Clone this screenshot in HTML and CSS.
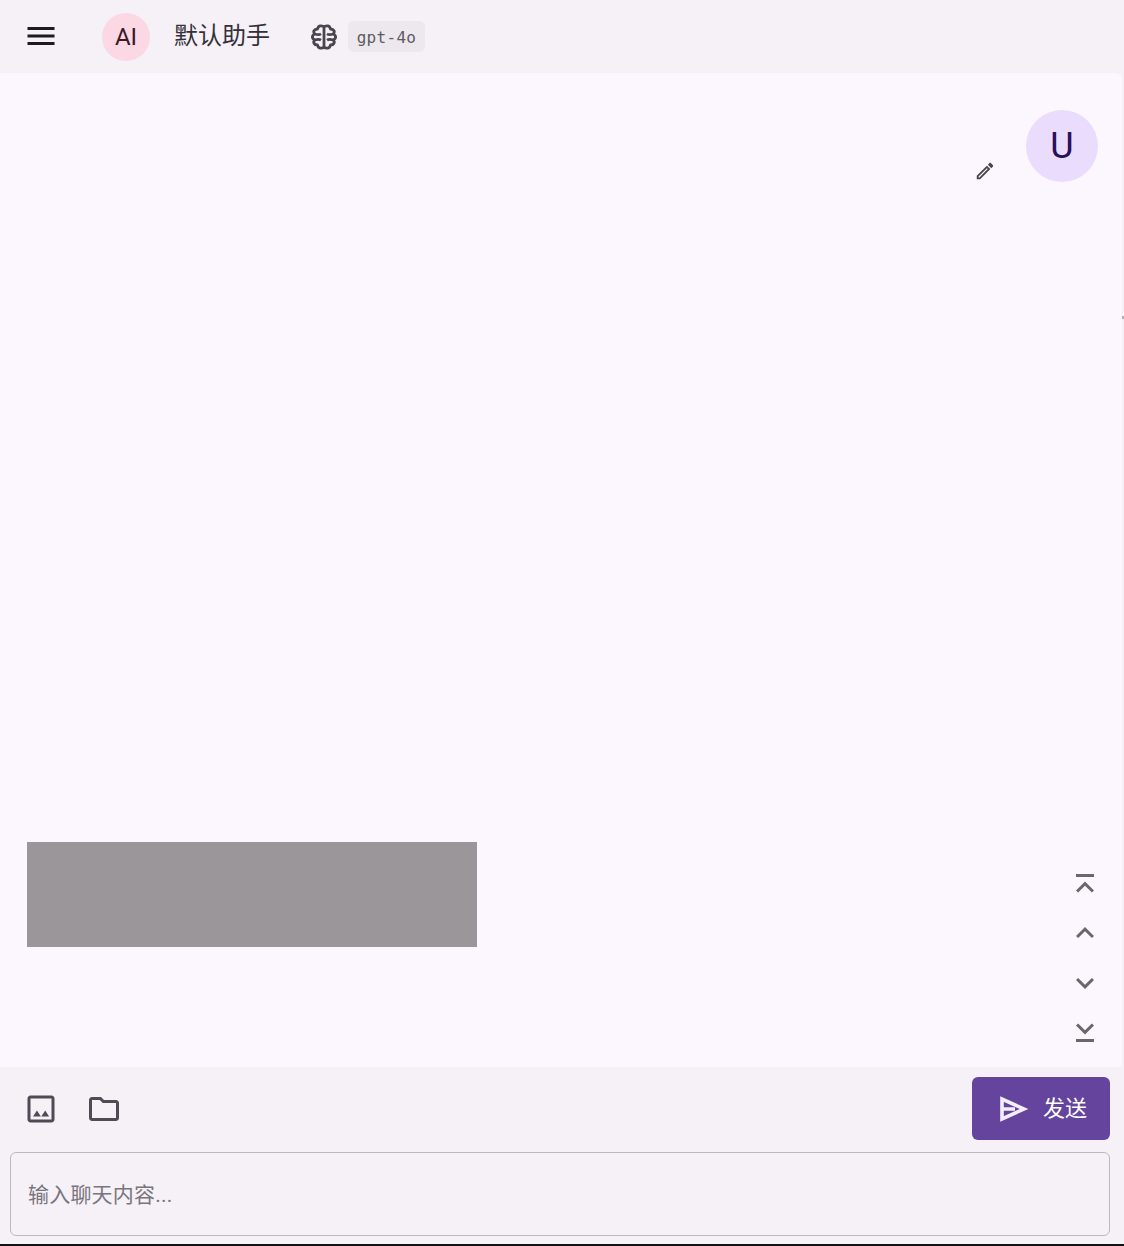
FILE: index.html
```html
<!DOCTYPE html>
<html lang="zh">
<head>
<meta charset="utf-8">
<title>默认助手</title>
<link rel="stylesheet" href="styles.css">
</head>
<body>
<div class="app">
  <header class="header">
    <svg class="icon36 menu-icon" viewBox="0 0 24 24"><path d="M3 18h18v-2H3v2zm0-5h18v-2H3v2zm0-7v2h18V6H3z"/></svg>
    <div class="avatar-ai">AI</div>
    <div class="title">默认助手</div>
    <svg class="brain" viewBox="0 0 28 28"><path d="M14 4C12 2 8 2.500 7.500 6 4 6 2.500 9 5 11 1.500 12.500 1.500 15.500 5 17 2.500 19 4 22 7.500 22 8 25.500 12 26 14 24 16 26 20 25.500 20.500 22 24 22 25.500 19 23 17 26.500 15.500 26.500 12.500 23 11 25.500 9 24 6 20.500 6 20 2.500 16 2 14 4V24M5 11c2.500.8 4.500.8 6-.2M5 17c2.500-.8 4.500-.8 6 .2M23 11c-2.500.8-4.500.8-6-.2M23 17c-2.500-.8-4.500-.8-6 .2"/></svg>
    <div class="chip">gpt-4o</div>
  </header>
  <main class="chat">
    <div class="user-row">
      <svg class="edit-icon" viewBox="0 0 24 24"><path d="M14.06 9.02l.92.92L5.920 19H5v-.92l9.060-9.060M17.660 3c-.25 0-.51.1-.7.29l-1.830 1.830 3.750 3.750 1.830-1.830c.39-.39.39-1.020 0-1.410l-2.340-2.340c-.2-.2-.45-.29-.71-.29zm-3.600 3.190L3 17.250V21h3.750L17.810 9.940l-3.750-3.750z"/></svg>
      <div class="avatar-user">U</div>
    </div>
    <div class="image-block"></div>
    <div class="scroll-buttons">
      <svg class="icon36" viewBox="0 0 24 24"><path d="M6 6h12v2H6zM7.410 18.410 12 13.830l4.590 4.580L18 17l-6-6-6 6z"/></svg>
      <svg class="icon36" viewBox="0 0 24 24"><path d="M7.410 15.410 12 10.830l4.590 4.580L18 14l-6-6-6 6z"/></svg>
      <svg class="icon36" viewBox="0 0 24 24"><path d="M7.410 8.590 12 13.170l4.590-4.580L18 10l-6 6-6-6z"/></svg>
      <svg class="icon36" viewBox="0 0 24 24"><path d="M6 16h12v2H6zM7.410 5.590 12 10.170l4.590-4.580L18 7l-6 6-6-6z"/></svg>
    </div>
    <span class="edge-mark"></span>
  </main>
  <footer class="composer">
    <div class="toolbar">
      <div class="tools">
        <svg class="icon36" viewBox="0 0 24 24"><path d="M19 5v14H5V5h14m0-2H5c-1.100 0-2 .9-2 2v14c0 1.100.9 2 2 2h14c1.100 0 2-.9 2-2V5c0-1.100-.9-2-2-2zM6.700 17l2.600-4 2.600 4zm5.500 0 2.600-4 2.600 4z"/></svg>
        <svg class="icon36" viewBox="0 0 24 24"><path d="M9.170 6l2 2H20v10H4V6h5.170M10 4H4c-1.100 0-1.990.9-1.990 2L2 18c0 1.100.9 2 2 2h16c1.100 0 2-.9 2-2V8c0-1.100-.9-2-2-2h-8l-2-2z"/></svg>
      </div>
      <button class="send" type="button">
        <svg class="send-icon" viewBox="0 0 33 33"><path class="send-outline" d="M4 7V27L26 17zM4 17H17"/></svg>
        <span class="send-label">发送</span>
      </button>
    </div>
    <div class="input">输入聊天内容...</div>
  </footer>
  <div class="bottom-line"></div>
</div>
</body>
</html>
```
FILE: styles.css
```css
* { box-sizing: border-box; }
html, body { margin: 0; padding: 0; }
body {
  font-family: Roboto, "Noto Sans CJK SC", sans-serif;
  background: #f6f0f7;
  color: #49454f;
}
.app {
  width: 1124px;
  height: 1246px;
  display: flex;
  flex-direction: column;
  background: #f6f0f7;
  overflow: hidden;
}
.icon36 { width: 36px; height: 36px; flex: none; fill: #4f4a55; display: block; }
.header {
  height: 73px;
  flex: none;
  display: flex;
  align-items: center;
  padding-left: 23px;
}
.menu-icon { fill: #1d1b20; margin-bottom: 2px; }
.avatar-ai {
  width: 48px;
  height: 48px;
  margin-left: 43px;
  border-radius: 50%;
  background: #fbd8e4;
  color: #3c1a28;
  font-size: 24px;
  display: flex;
  align-items: center;
  justify-content: center;
}
.title {
  margin-left: 24px;
  margin-bottom: 1px;
  font-size: 24px;
  line-height: 32px;
  color: #333137;
}
.brain {
  width: 28px;
  height: 28px;
  margin-left: 40px;
  fill: none;
  stroke: #49454f;
  stroke-width: 2.8;
  stroke-linejoin: round;
}
.chip {
  margin-left: 10px;
  width: 77px;
  height: 31px;
  border-radius: 6px;
  background: #ece8ed;
  color: #5f5b63;
  font-family: "DejaVu Sans Mono", monospace;
  font-size: 16px;
  letter-spacing: 0.3px;
  padding-top: 2px;
  display: flex;
  align-items: center;
  justify-content: center;
}
.chat {
  flex: 1;
  margin-right: 2px;
  background: #fcf7fe;
  border-top-right-radius: 6px;
  position: relative;
  display: flex;
  flex-direction: column;
  justify-content: space-between;
  padding: 37px 24px 120px 27px;
}
.user-row { display: flex; justify-content: flex-end; align-items: flex-start; }
.edit-icon { width: 22px; height: 22px; margin-top: 50px; margin-right: 30px; fill: #49454f; }
.avatar-user {
  width: 72px;
  height: 72px;
  border-radius: 50%;
  background: #e9dcfd;
  color: #2a0f5c;
  font-size: 36px;
  display: flex;
  align-items: center;
  justify-content: center;
}
.image-block { width: 450px; height: 105px; background: #9a969a; }
.scroll-buttons {
  position: absolute;
  right: 19px;
  bottom: 16px;
  display: flex;
  flex-direction: column;
  gap: 14px;
}
.scroll-buttons .icon36 { fill: #6a656f; }
.edge-mark {
  position: absolute;
  right: -2px;
  top: 243px;
  width: 2px;
  height: 3px;
  background: #b5b1b8;
}
.composer {
  flex: none;
  height: 177px;
  padding: 10px 14px 8px 10px;
  display: flex;
  flex-direction: column;
  gap: 12px;
}
.toolbar { display: flex; justify-content: space-between; align-items: center; height: 63px; }
.tools { display: flex; gap: 27px; padding-left: 13px; }
.send {
  width: 138px;
  height: 63px;
  border: 0;
  border-radius: 6px;
  background: #64449c;
  color: #fff;
  font-family: inherit;
  font-size: 22px;
  display: flex;
  align-items: center;
  gap: 12px;
  padding: 0 0 0 26px;
}
.send-icon { width: 33px; height: 33px; flex: none; }
.send-outline { fill: none; stroke: #f4eefb; stroke-width: 3.6; }
.send-label { padding-bottom: 6px; }
.input {
  width: 1100px;
  height: 84px;
  border: 1px solid #bdb8c0;
  border-radius: 6px;
  padding: 0 0 3px 17px;
  display: flex;
  align-items: center;
  font-size: 21px;
  letter-spacing: 0.2px;
  color: #79757c;
}
.bottom-line { height: 2px; flex: none; background: #111; }
```
